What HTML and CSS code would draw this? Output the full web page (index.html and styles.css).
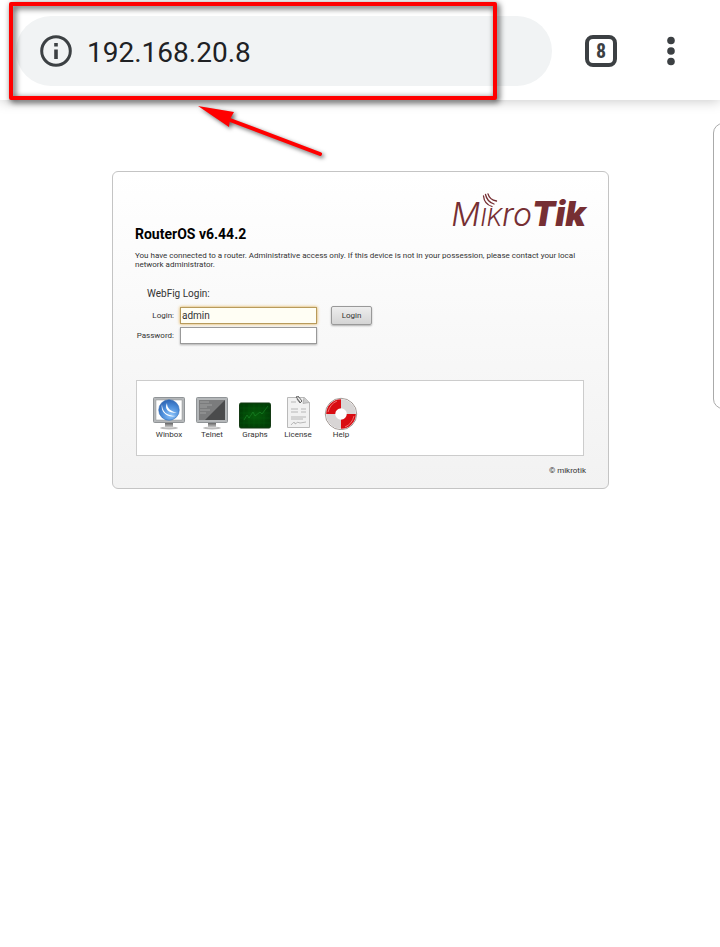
FILE: index.html
```html
<!DOCTYPE html>
<html lang="en">
<head>
<meta charset="utf-8">
<meta name="viewport" content="width=device-width, initial-scale=1">
<title>RouterOS</title>
<link rel="stylesheet" href="styles.css">
</head>
<body>
<header class="toolbar">
  <div class="omnibox">
    <svg class="info" viewBox="0 0 32 32" aria-hidden="true"><circle cx="16" cy="16" r="14.3" fill="none" stroke="#3c4043" stroke-width="3"/><path d="M14.2 8h3.6v3.6h-3.6zM14.2 14.5h3.6V24h-3.6z" fill="#3c4043"/></svg>
    <input class="url" type="text" value="192.168.20.8" aria-label="Address">
  </div>
  <button class="tabs" type="button" aria-label="Open tabs">8</button>
  <button class="menu" type="button" aria-label="Menu">
    <svg viewBox="0 0 10 30" aria-hidden="true"><g fill="#3c4043"><circle cx="5" cy="4.500" r="3.800"/><circle cx="5" cy="15" r="3.800"/><circle cx="5" cy="25.500" r="3.800"/></g></svg>
  </button>
  <div class="highlight"></div>
  <svg class="arrow" viewBox="0 0 140 64" aria-hidden="true"><path d="M36 18.500L130 54" stroke="#f00" stroke-width="4" stroke-linecap="round"/><path d="M8 6L44 12L40 19L39 27Z" fill="#f00"/></svg>
</header>
<main class="page">
  <div class="side-tab"></div>
  <section class="panel">
    <div class="logo"><span class="thin">M<small>IK</small>ro</span><span class="heavy">Tik</span>
      <svg class="waves" viewBox="0 0 18 16" aria-hidden="true"><g fill="none" stroke="#762f33" stroke-width="1.300" stroke-linecap="round"><path d="M1.500 3C2 8 5 12 10 13.500"/><path d="M3.500 1.500C4.500 6 7 9.500 12 11"/><path d="M6 .8C7 4.500 9.500 7 14.500 8"/></g></svg>
    </div>
    <h1>RouterOS v6.44.2</h1>
    <p class="intro">You have connected to a router. Administrative access only. If this device is not in your possession, please contact your local network administrator.</p>
    <form class="login">
      <h2>WebFig Login:</h2>
      <label for="user">Login:</label>
      <input class="field active" id="user" type="text" value="admin">
      <button class="submit" type="button">Login</button>
      <label for="pass">Password:</label>
      <input class="field" id="pass" type="password">
    </form>
    <nav class="links">
      <a href="#winbox">
        <svg viewBox="0 0 34 34" aria-hidden="true"><defs><radialGradient id="ball" cx=".6" cy=".75" r=".8"><stop offset="0" stop-color="#8cc3fa"/><stop offset=".55" stop-color="#4a8bd8"/><stop offset="1" stop-color="#2a5fae"/></radialGradient><linearGradient id="stand" x2="0" y2="1"><stop stop-color="#666"/><stop offset="1" stop-color="#ddd"/></linearGradient></defs><ellipse cx="17" cy="32" rx="9" ry="1.500" fill="#bbb"/><path d="M13 27h8v4l2 1H11l2-1z" fill="url(#stand)"/><rect x="1.500" y="1.500" width="31" height="25" rx="1" fill="#b4b7b9" stroke="#909497"/><path d="M4 4h26v20H4z" fill="#fff" stroke="#8c9093" stroke-width=".5"/><circle cx="17" cy="14" r="10.300" fill="url(#ball)" stroke="#2a65ae" stroke-width=".5"/><path d="M10 8C10 15 14 20 24 20C15 22 8 16 10 8ZM15 7C15 12 18 15 25 17C16 17 12 13 15 7Z" fill="#fff"/></svg>
        <span>Winbox</span></a>
      <a href="#telnet">
        <svg viewBox="0 0 34 34" aria-hidden="true"><ellipse cx="17" cy="32" rx="9" ry="1.500" fill="#bbb"/><path d="M13 27h8v4l2 1H11l2-1z" fill="url(#stand)"/><rect x="1.500" y="1.500" width="31" height="25" rx="1" fill="#b4b7b9" stroke="#909497"/><path d="M4 4h26v20H4z" fill="#4a4b4c"/><path d="M4 4h26L10 24H4z" fill="#7b7c7d"/><path d="M5 6h9M5 9h12M5 11h7M5 14h10M5 17h6" stroke="#aaa" stroke-width=".8"/></svg>
        <span>Telnet</span></a>
      <a href="#graphs">
        <svg viewBox="0 0 34 34" aria-hidden="true"><defs><radialGradient id="screen"><stop stop-color="#065c0a"/><stop offset="1" stop-color="#013f06"/></radialGradient></defs><rect x="1.500" y="7" width="31" height="25" rx="1.500" fill="url(#screen)" stroke="#143a14"/><path d="M6 8v23M11 8v23M16 8v23M21 8v23M26 8v23M2 12h30M2 17h30M2 22h30M2 27h30" stroke="#0b6a14" stroke-width=".3"/><path d="M6 24L9 19L11 22L15 16L17 20L22 16L24 18L30 10" fill="none" stroke="#1c8a2a" stroke-width=".6"/></svg>
        <span>Graphs</span></a>
      <a href="#license">
        <svg viewBox="0 0 34 34" aria-hidden="true"><path d="M6.500 1.500h17l5 5v25h-22z" fill="#f1f1f1" stroke="#b9b9b9"/><path d="M23 1.500l-1 6 6.500-1" fill="#ccc" stroke="#999" stroke-width=".6"/><path d="M10 6h5M10 13h7M20 13h5M10 16h7M20 16h5M10 21h15M10 23h12" stroke="#aaa" stroke-width=".8"/><path d="M10 29q4-5 4-1q3-3 5-1l6-1" fill="none" stroke="#aaa" stroke-width=".8"/><path d="M19 6l-4-5 2-1 4 5-2 2-3-4" fill="none" stroke="#666"/></svg>
        <span>License</span></a>
      <a href="#help">
        <svg viewBox="0 0 34 34" aria-hidden="true"><circle cx="17" cy="18" r="15.700" fill="#fff" stroke="#897e79" stroke-width=".8"/><circle cx="17" cy="18" r="10.300" fill="none" stroke="#d8d5d5" stroke-width="9"/><g fill="none" stroke="#d90c12" stroke-width="9"><path d="M6.700 18A10.300 10.300 0 0 1 17 7.700M27.300 18A10.300 10.300 0 0 1 17 28.300"/></g><path d="M4 16q2-8 9-11M30 20q-2 8-9 11" stroke="#ef7070" stroke-width="1" fill="none"/></svg>
        <span>Help</span></a>
    </nav>
    <footer>© mikrotik</footer>
  </section>
</main>
</body>
</html>
```
FILE: styles.css
```css
* { box-sizing: border-box; }
body {
  margin: 0;
  background: #fff;
  color: #333;
  font-family: Roboto, "Liberation Sans", sans-serif;
  font-size: 8px;
}
button, input { font-family: inherit; margin: 0; }

.toolbar {
  position: relative;
  display: flex;
  align-items: center;
  height: 100px;
  padding: 2px 28px 0 16px;
  background: #fff;
  box-shadow: 0 1px 12px rgba(0, 0, 0, .22);
}
.omnibox {
  display: flex;
  align-items: center;
  gap: 15px;
  flex: 1;
  height: 70px;
  padding: 0 24px;
  border-radius: 35px;
  background: #f1f3f4;
}
.info { width: 32px; height: 32px; }
.url {
  flex: 1;
  min-width: 0;
  padding: 2px 0 0;
  border: 0;
  outline: 0;
  background: none;
  color: #202124;
  font-size: 28px;
}
.tabs {
  width: 32px;
  height: 32px;
  margin: 0 33px;
  padding: 0;
  border: 4px solid #3c4043;
  border-radius: 8px;
  background: #fff;
  color: #3c4043;
  font: bold 20px/24px "Roboto Condensed", Roboto, sans-serif;
}
.menu {
  display: flex;
  justify-content: center;
  width: 42px;
  padding: 0;
  border: 0;
  background: none;
}
.menu svg { width: 10px; height: 30px; }
.highlight {
  position: absolute;
  top: 2px;
  left: 9px;
  width: 488px;
  height: 98px;
  border: 4px solid #f00;
  border-radius: 2px;
  filter: drop-shadow(2px 2px 3px rgba(0, 0, 0, .8));
}
.arrow {
  position: absolute;
  top: 100px;
  left: 190px;
  width: 140px;
  height: 64px;
  filter: drop-shadow(2px 2px 2px rgba(0, 0, 0, .6));
}

.page {
  position: relative;
  padding: 71px 111px 40px 112px;
  overflow: hidden;
  z-index: -1;
}
.side-tab {
  position: absolute;
  top: 23px;
  right: -20px;
  width: 27px;
  height: 286px;
  border: 1px solid #aaa;
  border-radius: 10px;
}
.panel {
  padding: 21px 22px 12px;
  border: 1px solid #c4c4c4;
  border-radius: 6px;
  background: linear-gradient(#fff, #f2f2f2);
}
.logo {
  position: relative;
  display: flex;
  align-items: baseline;
  justify-content: flex-end;
  height: 34px;
  color: #762f33;
  font: italic 32px/42px Inter, sans-serif;
}
.thin { font-weight: 300; }
.thin small { font-size: 24px; }
.heavy { font-size: 34px; font-weight: 900; }
.waves {
  position: absolute;
  top: 0;
  right: 86px;
  width: 18px;
  height: 16px;
}
h1 {
  margin: 0;
  color: #000;
  font-size: 14px;
  font-weight: 700;
  line-height: 14px;
}
.intro {
  margin: 10px 0 18px;
  line-height: 9px;
}
.login {
  display: grid;
  grid-template-columns: 39px 137px 49px;
  column-gap: 6px;
  row-gap: 2px;
  align-items: center;
}
.login h2 {
  grid-column: 1 / -1;
  margin: 0 12px 3px;
  font-size: 10px;
  font-weight: 400;
  line-height: 14px;
}
.login label { grid-column: 1; text-align: right; }
.field {
  width: 100%;
  height: 17px;
  padding: 0 1px;
  border: 1px solid #999;
  outline: 0;
  background: #fff;
  color: #333;
  font-size: 10px;
  box-shadow: 0 1px 2px rgba(0, 0, 0, .3);
}
.field.active {
  border-color: #b89b5c;
  background: #fffef4;
  box-shadow: 0 0 3px #d9a43c;
}
.submit {
  height: 19px;
  margin-left: 8px;
  padding: 0;
  border: 1px solid #999;
  border-radius: 2px;
  background: linear-gradient(#eee, #d4d4d4);
  color: #333;
  font-size: 8px;
  box-shadow: 0 1px 2px rgba(0, 0, 0, .3);
}
.links {
  display: flex;
  gap: 9px;
  height: 76px;
  margin: 36px 2px 10px 1px;
  padding: 15px;
  border: 1px solid #ccc;
  background: #fff;
}
.links a {
  display: flex;
  flex-direction: column;
  align-items: center;
  width: 34px;
  color: #333;
  text-decoration: none;
}
.links svg { flex: none; width: 34px; height: 34px; }
footer { line-height: 10px; text-align: right; }
```
